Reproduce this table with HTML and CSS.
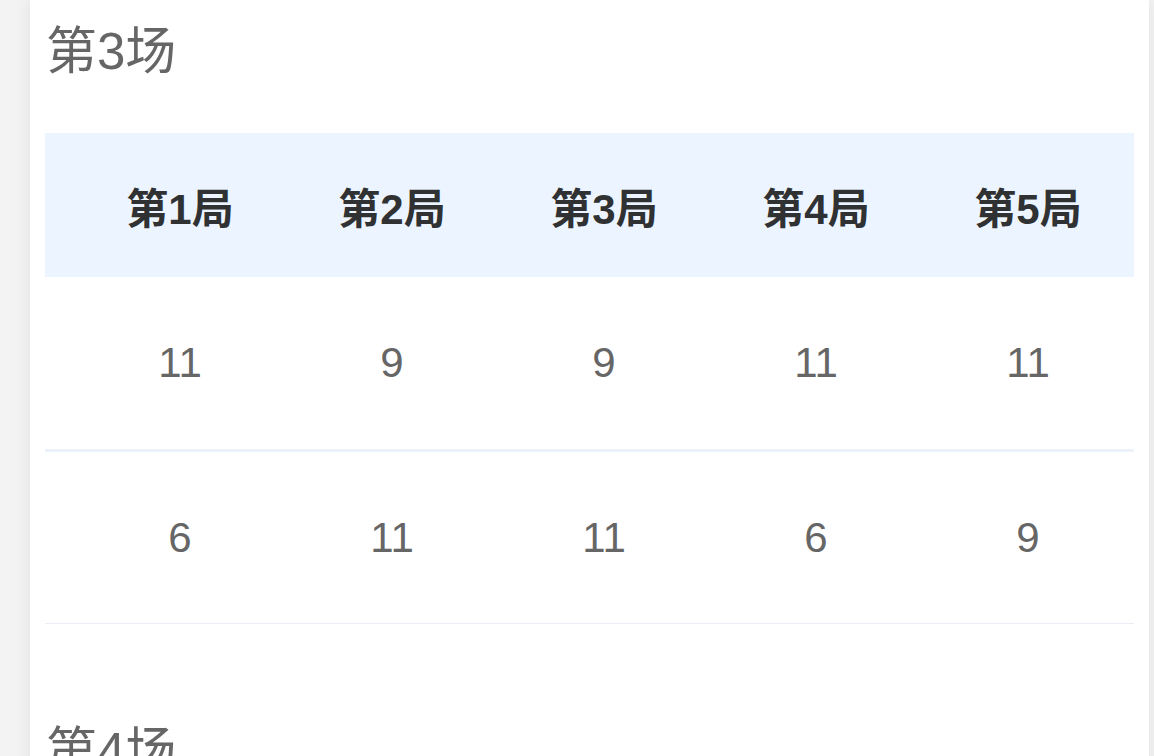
FILE: index.html
```html
<!DOCTYPE html>
<html lang="zh-CN">
<head>
<meta charset="utf-8">
<title>比分</title>
<link rel="stylesheet" href="styles.css">
</head>
<body>
<div class="card">
  <section class="match">
    <h2 class="match-title">第3场</h2>
    <div class="score-table">
      <div class="row head">
        <div class="cell">第1局</div>
        <div class="cell">第2局</div>
        <div class="cell">第3局</div>
        <div class="cell">第4局</div>
        <div class="cell">第5局</div>
      </div>
      <div class="row body first">
        <div class="cell">11</div>
        <div class="cell">9</div>
        <div class="cell">9</div>
        <div class="cell">11</div>
        <div class="cell">11</div>
      </div>
      <div class="row body">
        <div class="cell">6</div>
        <div class="cell">11</div>
        <div class="cell">11</div>
        <div class="cell">6</div>
        <div class="cell">9</div>
      </div>
    </div>
  </section>
  <section class="match">
    <h2 class="match-title">第4场</h2>
  </section>
</div>
</body>
</html>
```

FILE: styles.css
```css
html, body {
  margin: 0;
  padding: 0;
  height: 100%;
  overflow: hidden;
}
body {
  background: #f3f3f4;
  font-family: "Liberation Sans", "Noto Sans CJK SC", sans-serif;
}
.card {
  margin-left: 30px;
  width: 1119px;
  min-height: 100%;
  box-sizing: border-box;
  background: #ffffff;
  padding: 19px 15px 0 15px;
  box-shadow: 0 0 16px rgba(0, 0, 0, 0.08);
}
.match {
  margin-bottom: 95px;
}
.match-title {
  margin: 0 0 48px 0;
  font-size: 51px;
  line-height: 66px;
  height: 66px;
  font-weight: normal;
  color: #666666;
  padding-left: 1px;
}
.score-table {
  width: 1089px;
}
.row {
  display: grid;
  grid-template-columns: repeat(5, 1fr);
  padding-left: 29px;
  align-items: center;
}
.row.head {
  height: 144px;
  background: #ecf5ff;
}
.row.head .cell {
  font-size: 42px;
  font-weight: bold;
  color: #303133;
  text-align: center;
}
.row.body {
  height: 171px;
  border-bottom: 1px solid #ebeef5;
}
.row.body.first {
  height: 172px;
  border-bottom: 3px solid #ebf2fa;
}
.row.body .cell {
  font-size: 42px;
  color: #666666;
  text-align: center;
}
```
